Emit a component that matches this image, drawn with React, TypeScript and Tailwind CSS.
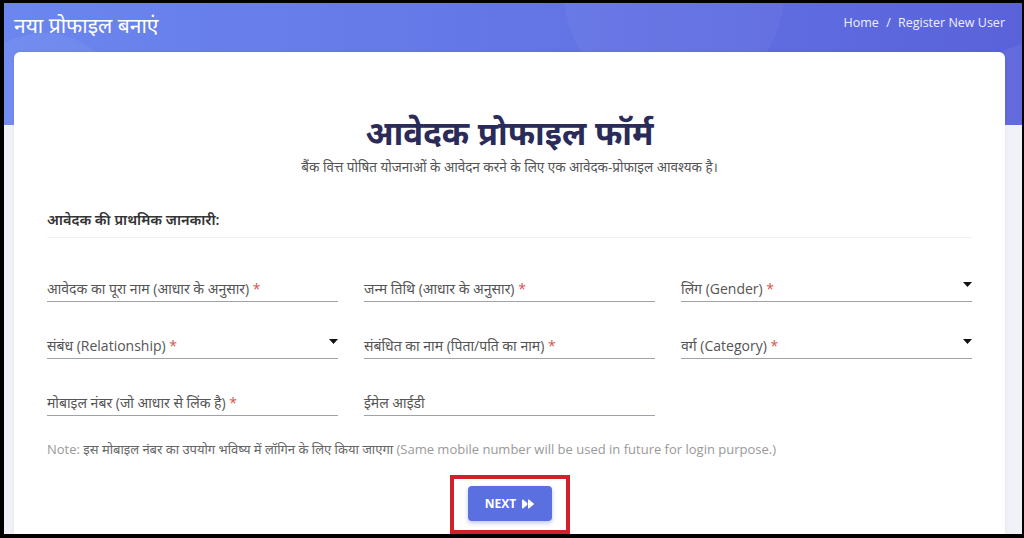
import { FaForward } from "react-icons/fa6";

const font = "font-['Open_Sans','Noto_Sans',sans-serif]";

type Field = {
  label: string;
  required?: boolean;
  select?: boolean;
};

const fields: Field[] = [
  { label: "आवेदक का पूरा नाम (आधार के अनुसार)", required: true },
  { label: "जन्म तिथि (आधार के अनुसार)", required: true },
  { label: "लिंग (Gender)", required: true, select: true },
  { label: "संबंध (Relationship)", required: true, select: true },
  { label: "संबंधित का नाम (पिता/पति का नाम)", required: true },
  { label: "वर्ग (Category)", required: true, select: true },
  { label: "मोबाइल नंबर (जो आधार से लिंक है)", required: true },
  { label: "ईमेल आईडी" },
];

function Caret() {
  return (
    <svg width="9" height="5" viewBox="0 0 9 5" className="mb-[12px]">
      <path d="M0 0h9L4.5 5z" fill="#111" />
    </svg>
  );
}

export default function App() {
  return (
    <div className={`h-[538px] w-[1024px] overflow-hidden bg-black pt-[3px] pl-[4px] pr-[2px] pb-[4px] ${font}`}>
      <div className="relative h-full w-full overflow-hidden bg-[#f1f2f7]">
        {/* header band */}
        <div className="relative h-[122px] overflow-hidden bg-gradient-to-r from-[#6b86ee] via-[#6476e6] to-[#5a62da]">
          <div className="absolute -left-[40px] top-[30px] h-[160px] w-[160px] rounded-full bg-white/5" />
          <div className="absolute left-[560px] -top-[120px] h-[220px] w-[220px] rounded-full bg-white/[0.04]" />
          <div className="absolute -right-[90px] top-[40px] h-[150px] w-[150px] rounded-full bg-white/[0.06]" />
          <div className="relative flex items-start justify-between pl-[10px] pr-[17px] pt-[8px]">
            <h2 className="text-[21px] leading-[28px] text-white">नया प्रोफाइल बनाएं</h2>
            <div className="pt-[3px] text-[12.5px] text-[#eef0ff]">
              Home <span className="mx-[4px]">/</span> Register New User
            </div>
          </div>
        </div>

        {/* card */}
        <div className="relative -mt-[73px] ml-[10px] mr-[17px] rounded-md bg-white px-[33px] pt-[61px] pb-[40px] shadow-[0_0_4px_rgba(0,0,0,0.06)]">
          <h1 className="text-center text-[33px] font-bold leading-[40px] text-[#2a2b58]">आवेदक प्रोफाइल फॉर्म</h1>
          <p className="mt-[5px] text-center text-[13.5px] leading-[18px] text-[#555]">
            बैंक वित्त पोषित योजनाओं के आवेदन करने के लिए एक आवेदक-प्रोफाइल आवश्यक है।
          </p>

          <div className="mt-[34px] border-b border-[#f0f0f0] pb-[7px] text-[14.5px] font-semibold leading-[20px] text-[#333]">
            आवेदक की प्राथमिक जानकारी:
          </div>

          <div className="mt-[30px] grid grid-cols-3 gap-x-[26px] gap-y-[23px]">
            {fields.map((f) => (
              <div key={f.label} className="flex h-[34px] items-end justify-between border-b border-[#9ea3a8] pb-[2px]">
                <span className="text-[14px] leading-[20px] text-[#555]">
                  {f.label}
                  {f.required && <span className="text-[#d9534f]"> *</span>}
                </span>
                {f.select && <Caret />}
              </div>
            ))}
          </div>

          <p className="mt-[24px] text-[13px] leading-[18px] text-[#999]">
            Note: <span className="text-[#666]">इस मोबाइल नंबर का उपयोग भविष्य में लॉगिन के लिए किया जाएगा</span> (Same mobile number will be used in future for login purpose.)
          </p>

          <div className="mt-[17px] flex justify-center">
            <div className="border-[4px] border-[#d0202c] px-[14px] pt-[7px] pb-[9px]">
              <button className="flex h-[35px] w-[84px] items-center justify-center gap-[6px] rounded-[4px] bg-[#5a6fe0] text-[12px] font-bold text-white shadow-[0_2px_4px_rgba(90,111,224,0.4)]">
                NEXT <FaForward className="text-[12px]" />
              </button>
            </div>
          </div>
        </div>
      </div>
    </div>
  );
}
